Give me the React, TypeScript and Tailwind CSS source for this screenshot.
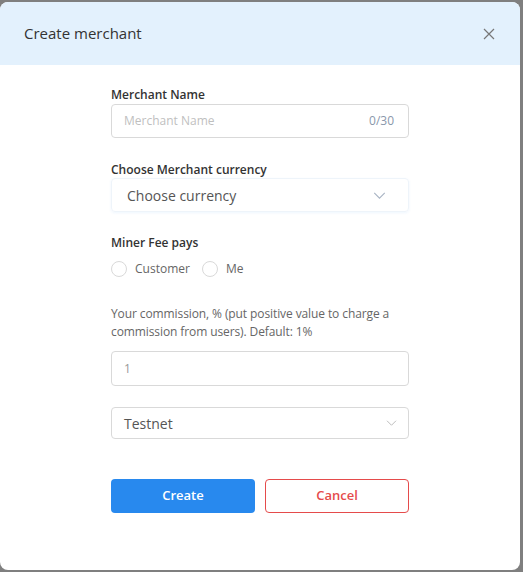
import React from 'react';

const Chevron = ({ className }: { className?: string }) => (
  <svg viewBox="0 0 14 8" className={className} fill="none" stroke="currentColor" strokeWidth="1.3">
    <path d="M1 1l6 6 6-6" />
  </svg>
);

const Radio = ({ label }: { label: string }) => (
  <label className="flex items-center gap-2 text-[12px] text-[#666]">
    <span className="w-4 h-4 rounded-full border border-[#d9d9d9] bg-white" />
    {label}
  </label>
);

const App = () => {
  return (
    <div className="w-[523px] h-[572px] bg-[#7f7f7f] pt-[2px] overflow-hidden" style={{ fontFamily: '"Open Sans", "Noto Sans", sans-serif' }}>
      <div className="w-[520px] h-[568px] bg-white rounded-lg overflow-hidden">
        <div className="h-[63px] bg-[#e3f1fd] flex items-center justify-between pl-6 pr-[25px]">
          <span className="text-[15px] text-[#333]">Create merchant</span>
          <svg viewBox="0 0 12 12" className="w-3 h-3 text-[#777]" fill="none" stroke="currentColor" strokeWidth="1.2">
            <path d="M1 1l10 10M11 1L1 11" />
          </svg>
        </div>

        <div className="w-[298px] mx-auto pt-[22px]">
          <div className="text-[12px] font-semibold text-[#333] leading-[16px]">Merchant Name</div>
          <div className="mt-[1px] h-[34px] border border-[#d9d9d9] rounded flex items-center justify-between pl-3 pr-[14px]">
            <span className="text-[12px] text-[#bfbfbf]">Merchant Name</span>
            <span className="text-[12px] text-[#8a97ab]">0/30</span>
          </div>

          <div className="mt-[24px] text-[12px] font-semibold text-[#333] leading-[16px]">Choose Merchant currency</div>
          <div className="h-[34px] border border-[#eef4fa] rounded shadow-[0_1px_3px_rgba(40,137,238,0.08)] flex items-center justify-between pl-[15px] pr-[22px]">
            <span className="text-[14px] text-[#555]">Choose currency</span>
            <Chevron className="w-[13px] h-[7px] text-[#a9b4c4]" />
          </div>

          <div className="mt-[23px] text-[12px] font-semibold text-[#333] leading-[16px]">Miner Fee pays</div>
          <div className="mt-[9px] flex items-center gap-3">
            <Radio label="Customer" />
            <Radio label="Me" />
          </div>

          <div className="mt-[27px] text-[12px] text-[#666] leading-[18px] tracking-[-0.1px]">
            Your commission, % (put positive value to charge a commission from users). Default: 1%
          </div>
          <div className="mt-[10px] h-[35px] border border-[#d9d9d9] rounded flex items-center pl-3">
            <span className="text-[12px] text-[#999]">1</span>
          </div>

          <div className="mt-[21px] h-[32px] border border-[#d9d9d9] rounded flex items-center justify-between pl-3 pr-[11px]">
            <span className="text-[14px] text-[#555]">Testnet</span>
            <Chevron className="w-[11px] h-[6px] text-[#bbb]" />
          </div>

          <div className="mt-[40px] flex gap-[10px]">
            <button className="w-[144px] h-[34px] rounded bg-[#2889ee] text-white text-[13px] font-semibold">Create</button>
            <button className="w-[144px] h-[34px] rounded border border-[#e54b4b] bg-white text-[#e54b4b] text-[13px] font-semibold">Cancel</button>
          </div>
        </div>
      </div>
    </div>
  );
};

export default App;
